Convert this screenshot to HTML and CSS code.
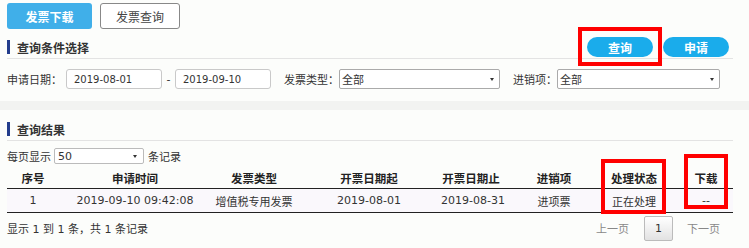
FILE: index.html
```html
<!DOCTYPE html>
<html>
  <head>
    <meta charset="utf-8">
    <title>发票下载</title>
    <link rel="stylesheet" href="styles.css">
  </head>
  <body>
  <div id="tabs">
    <a class="tab tab-on" href="#">发票下载</a>
    <a class="tab" href="#">发票查询</a>
  </div>

  <div class="section-head">
    <h3><i class="bar"></i>查询条件选择</h3>
    <div class="head-btns">
      <span class="mark-wrap"><a class="btn-round" href="#">查询</a><span class="mark mark-query"></span></span>
      <a class="btn-round" href="#">申请</a>
    </div>
  </div>

  <form id="searchForm" onsubmit="return false;">
    <label class="lbl-date">申请日期：</label>
    <input class="txt" type="text" value="2019-08-01">
    <span class="dash">-</span>
    <input class="txt" type="text" value="2019-09-10">
    <label class="lbl-type">发票类型：</label>
    <div class="sel sel-type">全部<b class="arrow"></b></div>
    <label class="lbl-io">进销项：</label>
    <div class="sel sel-io">全部<b class="arrow"></b></div>
  </form>

  <div class="band"></div>

  <div class="section-head head-result">
    <h3><i class="bar"></i>查询结果</h3>
  </div>

  <div id="pageSize">
    <span class="lbl-size">每页显示</span>
    <div class="sel sel-size">50<b class="arrow"></b></div>
    <span>条记录</span>
  </div>

  <div id="resultWrap">
    <table id="result">
      <colgroup>
        <col style="width:52px"><col style="width:152px"><col style="width:86px"><col style="width:144px">
        <col style="width:60px"><col style="width:106px"><col style="width:54px"><col style="width:72px">
      </colgroup>
      <thead>
        <tr>
          <th>序号</th><th>申请时间</th><th>发票类型</th><th>开票日期起</th>
          <th>开票日期止</th><th>进销项</th><th>处理状态</th><th class="col-dl">下载</th>
        </tr>
      </thead>
      <tbody>
        <tr>
          <td>1</td><td>2019-09-10 09:42:08</td><td>增值税专用发票</td><td>2019-08-01</td>
          <td>2019-08-31</td><td>进项票</td><td>正在处理</td><td class="col-dl">--</td>
        </tr>
      </tbody>
    </table>
    <span class="mark mark-state"></span>
    <span class="mark mark-dl"></span>
  </div>

  <div id="footer">
    <span class="info">显示 1 到 1 条，共 1 条记录</span>
    <div class="pager">
      <a href="#" class="pg-text">上一页</a>
      <a href="#" class="pg-num">1</a>
      <a href="#" class="pg-text">下一页</a>
    </div>
  </div>
  </body>
</html>
```
FILE: styles.css
```css
body { margin: 0; background: #fcfdfb; color: #333; font-family: "DejaVu Sans", "Noto Sans CJK SC", sans-serif; font-size: 11px; }
a { text-decoration: none; }
h3 { margin: 0; font-size: 12px; font-weight: bold; color: #333; display: flex; align-items: center; }

#tabs { display: flex; gap: 8px; padding: 3px 0 0 7px; }
.tab { display: flex; align-items: center; justify-content: center; width: 78px; height: 24px; border: 1px solid #888; border-radius: 3px; background: #fff; color: #444; font-size: 12px; }
.tab-on { width: 85px; height: 26px; border: 0; background: #40afe9; color: #fff; font-weight: bold; }

.section-head { display: flex; align-items: center; justify-content: space-between; height: 22px; margin: 7px 16px 0 7px; border-bottom: 1px solid #e3e3e3; }
.bar { display: inline-block; width: 3px; height: 14px; background: #233d8c; margin-right: 7px; }
.head-btns { display: flex; gap: 10px; padding-right: 4px; }
.btn-round { display: flex; align-items: center; justify-content: center; width: 66px; height: 20px; border-radius: 10px; background: #1aaceb; color: #fff; font-size: 12px; font-weight: bold; }

.mark-wrap { position: relative; }
.mark { position: absolute; border: 4px solid #f00; box-sizing: border-box; }
.mark-query { left: -9px; top: -10px; width: 84px; height: 39px; }

#searchForm { display: flex; align-items: center; margin: 10px 0 0 7px; height: 20px; }
.lbl-date { width: 59px; }
.txt { width: 96px; height: 20px; box-sizing: border-box; border: 1px solid #c9c9c9; border-radius: 3px; padding: 0 0 0 7px; background: #fff; color: #333; font-family: "DejaVu Sans", sans-serif; font-size: 10px; }
.dash { width: 13px; text-align: center; }
.lbl-type { margin-left: 13px; width: 55px; }
.lbl-io { margin-left: 13px; width: 44px; }
.sel { position: relative; display: flex; align-items: center; box-sizing: border-box; height: 20px; border: 1px solid #aaa; border-radius: 2px; background: #fff; padding-left: 2px; }
.sel-type { width: 161px; }
.sel-io { width: 163px; }
.arrow { position: absolute; right: 5px; top: 8px; border-left: 2px solid transparent; border-right: 2px solid transparent; border-top: 3px solid #333; }

.band { height: 9px; margin-top: 12px; background: #f2f3f1; }
.head-result { margin-top: 8px; }

#pageSize { display: flex; align-items: center; margin: 7px 0 0 7px; height: 16px; }
.lbl-size { width: 47px; }
.sel-size { width: 90px; height: 16px; padding-left: 3px; margin-right: 4px; border-color: #bbb; }
.sel-size .arrow { right: 6px; top: 6px; }

#resultWrap { position: relative; margin: 3px 16px 0 7px; }
#result { width: 726px; table-layout: fixed; border-collapse: collapse; }
#result th, #result td { padding: 0; text-align: center; white-space: nowrap; }
#result th { height: 21px; font-size: 11.5px; font-weight: bold; color: #222; border-bottom: 1px solid #222; }
#result td { height: 23px; background: #faf8fc; color: #333; border-bottom: 1px solid #222; }
#result .col-dl { padding-left: 18px; }
.mark-state { left: 594px; top: -8px; width: 65px; height: 55px; }
.mark-dl { left: 677px; top: -13px; width: 44px; height: 55px; }

#footer { display: flex; align-items: center; justify-content: space-between; margin: 2px 16px 0 7px; height: 26px; }
.pager { display: flex; align-items: center; padding-right: 13px; white-space: nowrap; }
.pg-text { color: #888; }
.pg-num { display: flex; align-items: center; justify-content: center; width: 27px; height: 23px; border: 1px solid #bbb; border-radius: 2px; background: linear-gradient(#fff, #e2e2e2); color: #333; margin: 0 14px 0 15px; }
```
